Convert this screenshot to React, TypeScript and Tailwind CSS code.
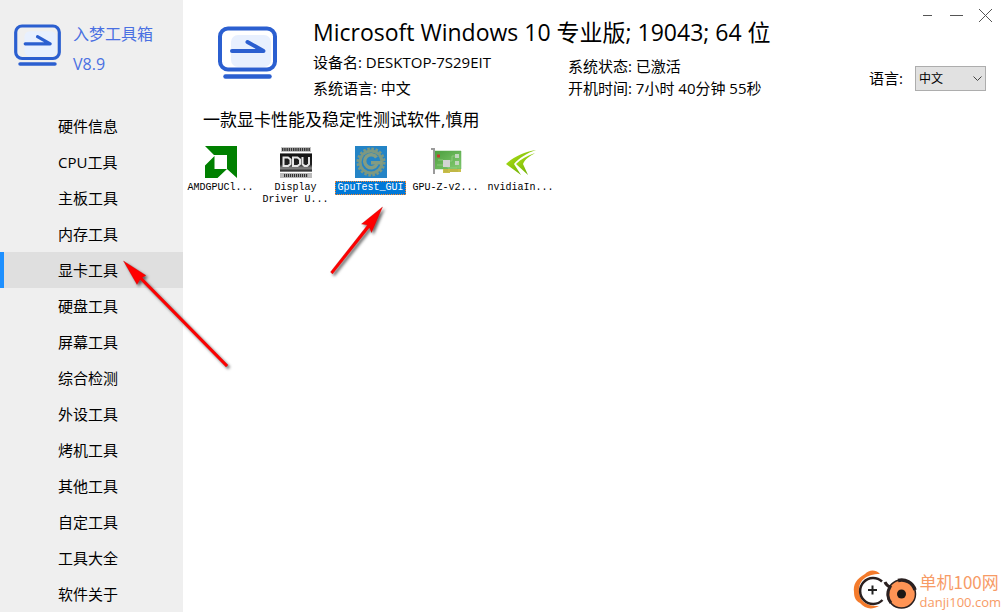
import React from "react";

const navItems = [
  "硬件信息",
  "CPU工具",
  "主板工具",
  "内存工具",
  "显卡工具",
  "硬盘工具",
  "屏幕工具",
  "综合检测",
  "外设工具",
  "烤机工具",
  "其他工具",
  "自定工具",
  "工具大全",
  "软件关于",
];

const Logo = ({ className }: { className: string }) => (
  <svg viewBox="0 0 59 53" className={className} fill="none" aria-hidden="true">
    <rect x="13" y="9" width="40" height="32" rx="7" fill="#e8f0fe" />
    <rect x="2" y="2.5" width="55" height="41" rx="8" stroke="#2b5fd0" strokeWidth="4" />
    <path d="M14 25h31.500L29.500 16" stroke="#2b5fd0" strokeWidth="4" strokeLinecap="round" strokeLinejoin="round" />
    <path d="M7.500 50.500h44" stroke="#2b5fd0" strokeWidth="4.500" strokeLinecap="round" />
  </svg>
);

const AmdIcon = () => (
  <svg viewBox="0 0 32 32" className="size-8" aria-hidden="true">
    <path d="M0 0h32v32L22 23V9H9z" fill="#008000" />
    <path d="M9.500 10 0 19.500V32h12.500l9.500-9H9.500z" fill="#008000" />
  </svg>
);

const DduIcon = () => (
  <svg viewBox="0 0 32 32" className="size-8" aria-hidden="true">
    <defs>
      <linearGradient id="ddu-shine" x1="0" y1="0" x2="0" y2="1">
        <stop offset="0" stopColor="#111" />
        <stop offset="0.600" stopColor="#222" />
        <stop offset="0.800" stopColor="#888" />
        <stop offset="1" stopColor="#000" />
      </linearGradient>
    </defs>
    <rect x="1" y="1" width="30" height="5" fill="#c4c4c4" />
    <path d="M2 3.500h28" stroke="#333" strokeWidth="3" strokeDasharray="1.500 0.700" />
    <rect y="7" width="32" height="19" fill="url(#ddu-shine)" />
    <path d="M0 7.500h32M0 25.500h32" stroke="#777" />
    <path d="M3.500 11.500h4.500l2.500 2v4.500l-2.500 2H3.500zM13 11.500h4.500l2.500 2v4.500l-2.500 2H13zM22.500 11v7l2 2H27l2-2v-7" fill="none" stroke="#e5e5e5" strokeWidth="2" />
    <rect y="27" width="32" height="5" fill="#bbb" />
    <path d="M4 29.500h24" stroke="#333" strokeWidth="3" strokeDasharray="1.200 0.800" />
  </svg>
);

const GpuTestIcon = () => (
  <svg viewBox="0 0 32 32" className="size-8" aria-hidden="true">
    <rect width="32" height="32" fill="#2484c6" />
    <circle cx="16" cy="16" r="12.500" fill="none" stroke="#7d9880" strokeWidth="4" strokeDasharray="2.400 1.527" />
    <circle cx="16" cy="16" r="12.500" fill="#7d9880" />
    <circle cx="16" cy="16" r="9.500" fill="#2484c6" />
    <path d="M21.500 11.500a6.500 6.500 0 1 0 .500 6.500" fill="none" stroke="#839c82" strokeWidth="3.500" />
    <path d="M16 15h11v3.500H16z" fill="#839c82" />
  </svg>
);

const GpuZIcon = () => (
  <svg viewBox="0 0 32 32" className="size-8" aria-hidden="true">
    <defs>
      <linearGradient id="board" x1="0" y1="0" x2="1" y2="1">
        <stop offset="0" stopColor="#4a9e3c" />
        <stop offset="1" stopColor="#86cc74" />
      </linearGradient>
    </defs>
    <path d="M4 5h27v18H4z" fill="url(#board)" stroke="#5fae50" strokeWidth="0.500" />
    <path d="M7 19h7v-4h8v-5h4M8 14h5M18 19v3h9" fill="none" stroke="#9ad285" strokeWidth="0.750" />
    <path d="M13 23h18v3H20v1h-7z" fill="#c9bf4a" />
    <path d="M15 23v3M17 23v3M21 23v3M23 23v3M25 23v3M27 23v3" stroke="#a5a23c" strokeWidth="0.500" />
    <path d="M1 3h3v25" fill="none" stroke="#9a9a9a" strokeWidth="2" />
    <path d="M7 8.500h3v3H7z" fill="#c53a2c" />
    <path d="M13 14h7v7h-7z" fill="#d2d4d3" />
    <path d="M25 8h4v4h-4zM25 15h4v4h-4z" fill="#c3d6be" />
  </svg>
);

const NvidiaIcon = () => (
  <svg viewBox="0 0 32 32" className="size-8" aria-hidden="true">
    <defs>
      <linearGradient id="leaf" x1="0" y1="0" x2="1" y2="1">
        <stop offset="0" stopColor="#b4e719" />
        <stop offset="1" stopColor="#5d9f00" />
      </linearGradient>
    </defs>
    <path d="M31 4C19 6 8 11 1 18l15 11-7-11C14 12 22 7 31 4z" fill="url(#leaf)" />
    <path d="M30 7c-8 3-14 6-19 11l12 11-5-11C20 13 25 10 30 7z" fill="url(#leaf)" />
  </svg>
);

const tools = [
  { lines: ["AMDGPUCl..."], Icon: AmdIcon },
  { lines: ["Display", "Driver U..."], Icon: DduIcon },
  { lines: ["GpuTest_GUI"], Icon: GpuTestIcon, selected: true },
  { lines: ["GPU-Z-v2..."], Icon: GpuZIcon },
  { lines: ["nvidiaIn..."], Icon: NvidiaIcon },
];

const Sidebar = () => (
  <aside className="w-[183px] shrink-0 bg-[#efefef]">
    <div className="flex h-[108px] gap-3 pt-[19px] pl-[14px]">
      <Logo className="mt-[5px] h-[42px] w-[47px]" />
      <div className="text-base leading-[30px] text-[#4a70e2]">
        <h1>入梦工具箱</h1>
        <p>V8.9</p>
      </div>
    </div>
    <nav>
      {navItems.map((item) => {
        const active = item === "显卡工具";
        return (
          <button
            key={item}
            type="button"
            aria-current={active ? "page" : undefined}
            className={`block h-9 w-full border-l-4 pl-[54px] text-left text-[15px] leading-[34px] ${
              active ? "border-[#1e90ff] bg-[#dfdfdf]" : "border-transparent"
            }`}
          >
            {item}
          </button>
        );
      })}
    </nav>
  </aside>
);

const WindowButtons = () => (
  <div className="flex pr-1 text-[#555]">
    <button type="button" aria-label="托盘" className="flex h-[30px] w-[29px] items-center justify-center">
      <span className="h-px w-[9px] bg-current" />
    </button>
    <button type="button" aria-label="最小化" className="flex h-[30px] w-[29px] items-center justify-center">
      <span className="h-px w-[13px] bg-current" />
    </button>
    <button type="button" aria-label="关闭" className="flex h-[30px] w-[29px] items-center justify-center">
      <svg viewBox="0 0 13 13" className="size-[13px]" stroke="currentColor">
        <path d="M0 0l13 13M13 0L0 13" />
      </svg>
    </button>
  </div>
);

const Header = () => (
  <header className="flex items-start">
    <Logo className="mt-[26px] ml-[35px] h-[53px] w-[59px] shrink-0" />
    <div className="ml-9 grow pt-4 text-[15px]">
      <h2 className="text-[23px] leading-[33px] whitespace-nowrap">
        Microsoft Windows 10 专业版; 19043; 64 位
      </h2>
      <div className="flex whitespace-nowrap">
        <div className="w-[255px] leading-[26px]">
          <p>设备名: DESKTOP-7S29EIT</p>
          <p>系统语言: 中文</p>
        </div>
        <div className="pt-[6px] leading-[22px]">
          <p>系统状态: 已激活</p>
          <p>开机时间: 7小时 40分钟 55秒</p>
        </div>
      </div>
    </div>
    <div className="flex shrink-0 flex-col items-end">
      <WindowButtons />
      <div className="mt-9 mr-[18px] flex items-center gap-3 text-[15px]">
        <label htmlFor="language">语言:</label>
        <div className="relative">
          <select
            id="language"
            className="block h-[25px] w-[71px] appearance-none border border-[#adadad] bg-[#e1e1e1] pl-[3px] text-xs"
          >
            <option>中文</option>
          </select>
          <svg viewBox="0 0 9 6" className="pointer-events-none absolute top-[10px] right-1 h-[6px] w-[9px]" fill="none" stroke="#444">
            <path d="M.5.500l4 4 4-4" />
          </svg>
        </div>
      </div>
    </div>
  </header>
);

const ToolGrid = () => (
  <ul className="mt-[14px] flex flex-wrap">
    {tools.map(({ lines, Icon, selected }) => (
      <li key={lines[0]}>
        <button type="button" className="flex w-[75px] flex-col items-center gap-[3px]">
          <Icon />
          <span
            className={`border border-dotted px-px font-['Liberation_Mono',monospace] text-[10px] leading-3 whitespace-nowrap ${
              selected ? "border-[#ff8728] bg-[#0078d7] text-white" : "border-transparent"
            }`}
          >
            {lines.map((line) => (
              <span key={line} className="block">
                {line}
              </span>
            ))}
          </span>
        </button>
      </li>
    ))}
  </ul>
);

// Red pointers drawn over the window
const Arrows = () => (
  <svg viewBox="0 0 300 130" className="pointer-events-none absolute top-[250px] left-0 h-[130px] w-[300px] overflow-visible" aria-hidden="true">
    <defs>
      <filter id="arrow-shadow" x="-20%" y="-20%" width="150%" height="150%">
        <feDropShadow dx="2" dy="2" stdDeviation="1.500" floodOpacity="0.600" />
      </filter>
    </defs>
    <g fill="#f00" stroke="#a31515" strokeWidth="0.300" filter="url(#arrow-shadow)">
      <path d="M123.500 11l22.500 14.500-4 2 86 87.500-2 2-86-87.500-3 5z" />
      <path d="M382.500-43l-21 17 6 1-37 47 2 2 37-46.500 2 5z" />
    </g>
  </svg>
);

const Watermark = () => (
  <div className="absolute right-[3px] bottom-0 flex h-[44px] items-center gap-[2px] text-[#f79b66]">
    <svg viewBox="0 0 64 44" className="h-[44px] w-[64px]" fill="none" aria-hidden="true">
      <path d="M27 6C22 1 16 2 12 6 3 11 0 17 1 24c0 6 2 9 6 11 5 6 12 7 19 3C14 39 7 33 6 24 5 13 13 6 27 6z" fill="#f47b2c" />
      <path d="M29 13.500A13 13 0 1 0 29.500 32" stroke="#2a2020" strokeWidth="2.500" />
      <path d="M15 22h9M19.500 17.500v9" stroke="#222" strokeWidth="2" />
      <circle cx="48.500" cy="26" r="14" fill="#ff9455" stroke="#2a2020" strokeWidth="1.500" />
      <path d="M32 14c1 3 3 4 5 5A13.500 13.500 0 0 0 38 35" stroke="#2a2020" strokeWidth="3" />
      <path d="M45 12.500A14 14 0 0 1 62 22" stroke="#2a2020" strokeWidth="3.500" />
      <circle cx="48.500" cy="26" r="4.500" fill="#1c1715" />
    </svg>
    <div className="whitespace-nowrap">
      <p className="font-['Noto_Sans_CJK_SC',sans-serif] text-[17px] leading-[23px]">单机100网</p>
      <p className="text-[13px] leading-[18px]">danji100.com</p>
    </div>
  </div>
);

export default function App() {
  return (
    <div className="relative flex min-h-screen overflow-hidden bg-white font-['Open_Sans','Noto_Sans_CJK_SC',sans-serif] text-black">
      <Sidebar />
      <main className="min-w-0 grow">
        <Header />
        <p className="mt-[7px] pl-5 text-[17px] leading-6">一款显卡性能及稳定性测试软件,慎用</p>
        <ToolGrid />
      </main>
      <Arrows />
      <Watermark />
    </div>
  );
}
